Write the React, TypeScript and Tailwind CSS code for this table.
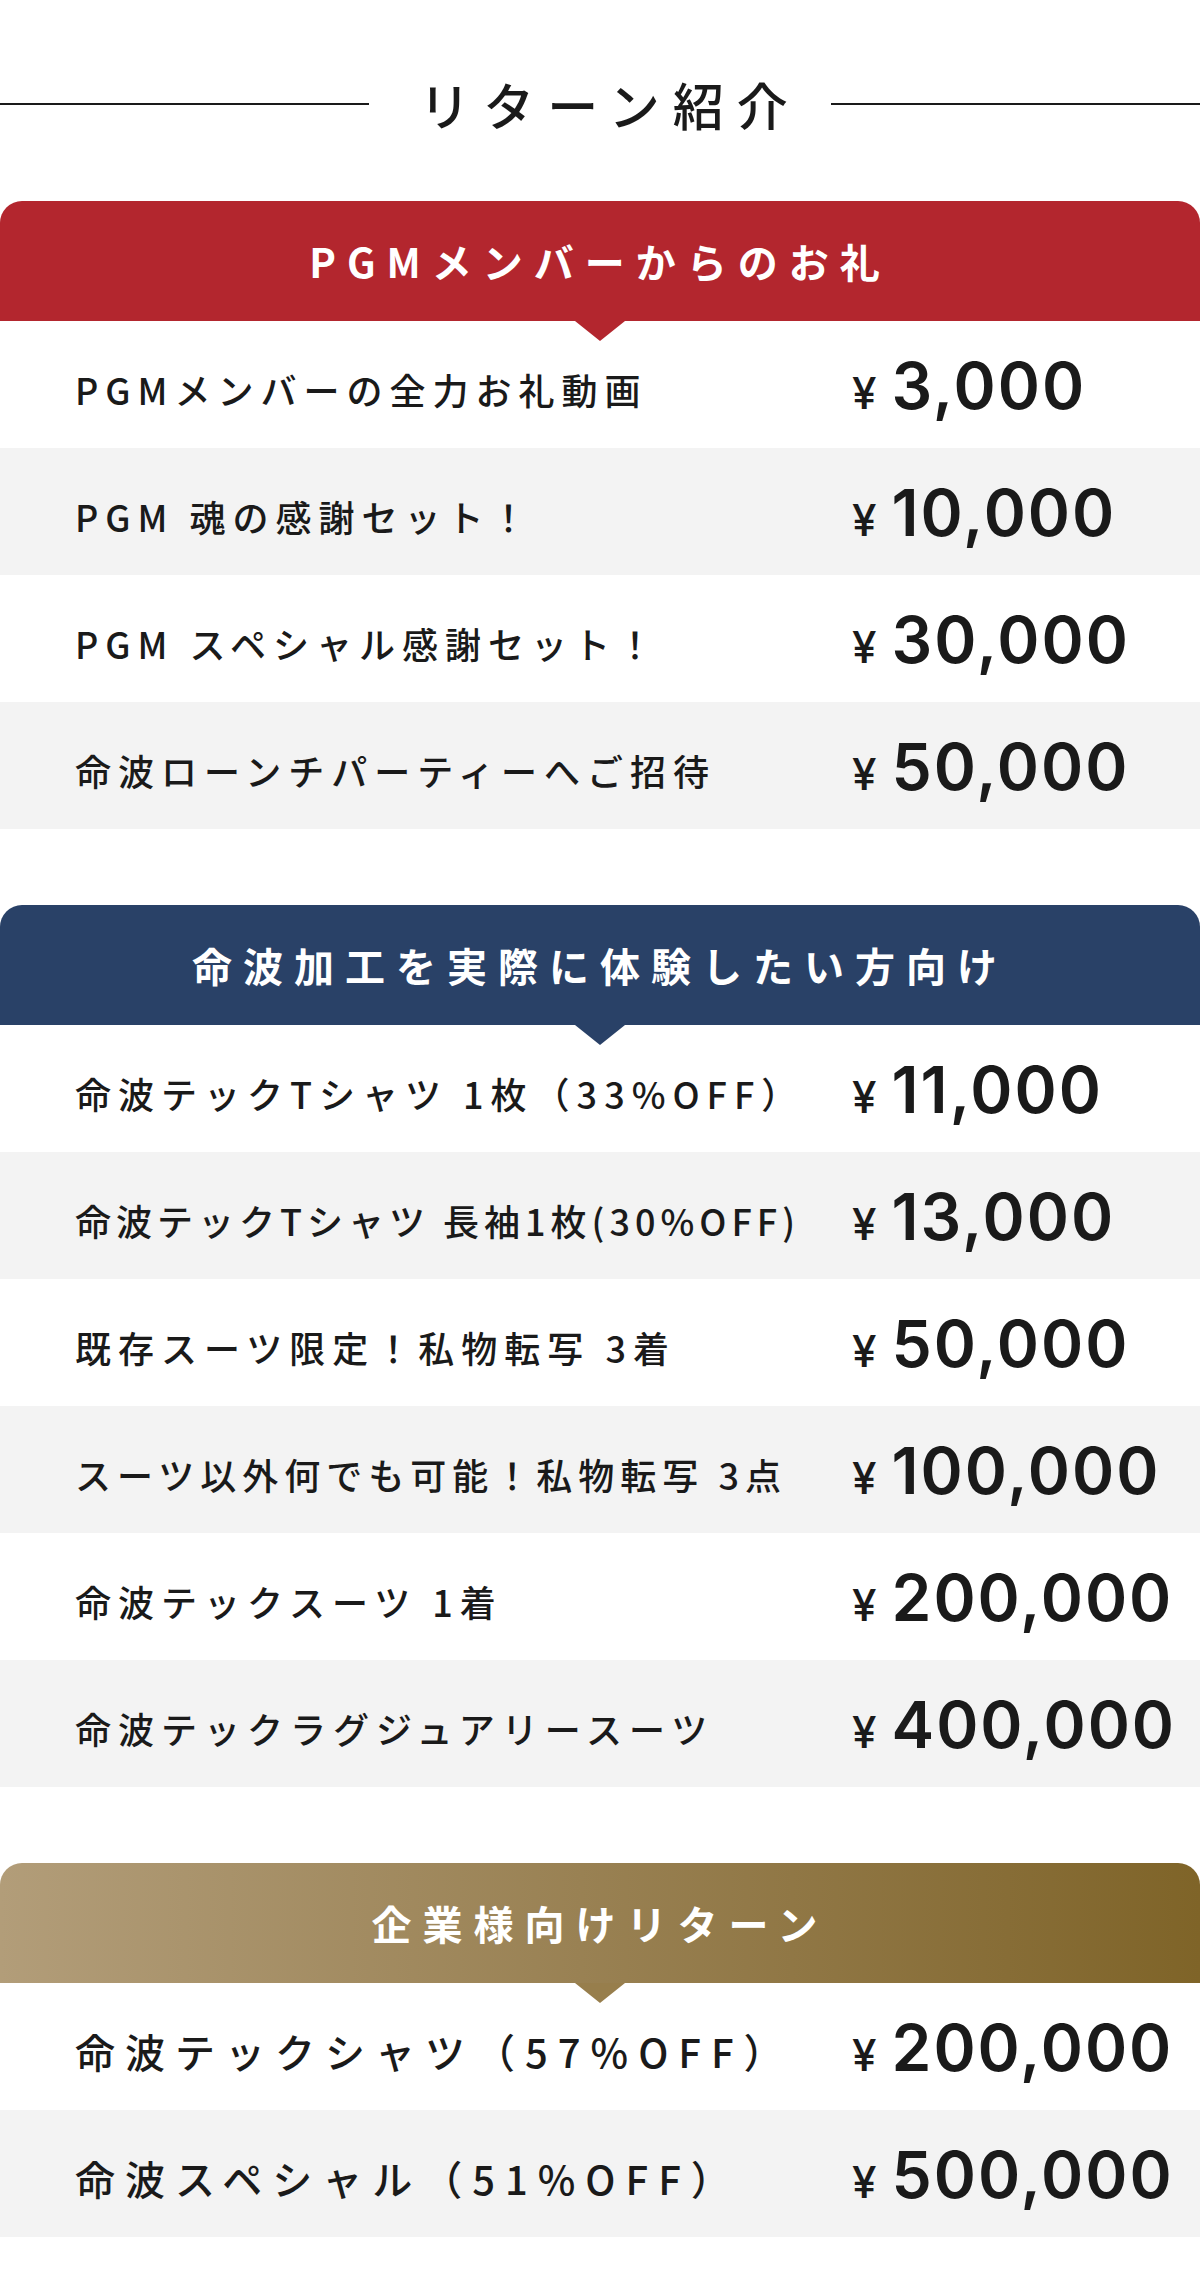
const jp = "font-['Noto_Sans_CJK_JP','Noto_Sans',sans-serif]"

type Item = { label: string; price: string; track?: string }

type Section = {
  title: string
  header: string
  tri: string
  big?: boolean
  items: Item[]
}

const sections: Section[] = [
  {
    title: 'PGMメンバーからのお礼',
    header: 'bg-[#b3262e]',
    tri: 'bg-[#b3262e]',
    items: [
      { label: 'PGMメンバーの全力お礼動画', price: '3,000' },
      { label: 'PGM 魂の感謝セット！', price: '10,000' },
      { label: 'PGM スペシャル感謝セット！', price: '30,000' },
      { label: '命波ローンチパーティーへご招待', price: '50,000' },
    ],
  },
  {
    title: '命波加工を実際に体験したい方向け',
    header: 'bg-[#294167]',
    tri: 'bg-[#294167]',
    items: [
      { label: '命波テックTシャツ 1枚（33%OFF）', price: '11,000' },
      { label: '命波テックTシャツ 長袖1枚(30%OFF)', price: '13,000', track: 'tracking-[5px]' },
      { label: '既存スーツ限定！私物転写 3着', price: '50,000' },
      { label: 'スーツ以外何でも可能！私物転写 3点', price: '100,000', track: 'tracking-[6px]' },
      { label: '命波テックスーツ 1着', price: '200,000' },
      { label: '命波テックラグジュアリースーツ', price: '400,000' },
    ],
  },
  {
    title: '企業様向けリターン',
    header: 'bg-gradient-to-r from-[#b29d79] to-[#7f6428]',
    tri: 'bg-[#977e4c]',
    big: true,
    items: [
      { label: '命波テックシャツ（57%OFF）', price: '200,000' },
      { label: '命波スペシャル（51%OFF）', price: '500,000' },
    ],
  },
]

function Row({ item, gray, big }: { item: Item; gray: boolean; big?: boolean }) {
  const size = big ? 'text-[40px] tracking-[10px]' : `text-[36px] ${item.track ?? 'tracking-[7px]'}`

  return (
    <div className={`h-[127px] flex items-center pl-[75px] ${gray ? 'bg-[#f3f3f3]' : 'bg-white'}`}>
      <p className={`flex-1 whitespace-nowrap font-medium text-[#1a1a1a] leading-none pt-[8px] ${jp} ${size}`}>
        {item.label}
      </p>
      <div className="w-[348px] shrink-0 flex items-baseline pt-[10px] text-[#1a1a1a] font-['Inter',sans-serif]">
        <span className="text-[44px] font-medium mr-[15px]">¥</span>
        <span className="text-[64px] font-semibold tracking-[2px] leading-none">{item.price}</span>
      </div>
    </div>
  )
}

export default function App() {
  return (
    <div className="w-[1200px] bg-white pt-[74px] pb-[39px]">
      {/* 見出し */}
      <div className="flex items-center h-[60px]">
        <div className="flex-1 h-[2px] bg-[#1a1a1a]" />
        <h1 className={`ml-[50px] mr-[30px] text-[51px] leading-none font-medium tracking-[13px] text-[#1a1a1a] ${jp}`}>
          リターン紹介
        </h1>
        <div className="flex-1 h-[2px] bg-[#1a1a1a]" />
      </div>

      <div className="mt-[67px] flex flex-col gap-[76px]">
        {sections.map((s) => (
          <section key={s.title}>
            <div className={`relative h-[120px] rounded-t-[22px] flex items-center justify-center ${s.header}`}>
              <h2 className={`text-white text-[40px] font-bold tracking-[11px] leading-none ${jp}`}>{s.title}</h2>
              <div
                className={`absolute left-1/2 -translate-x-1/2 top-full w-[50px] h-[20px] z-10 [clip-path:polygon(0_0,100%_0,50%_100%)] ${s.tri}`}
              />
            </div>
            {s.items.map((item, i) => (
              <Row key={item.label} item={item} gray={i % 2 === 1} big={s.big} />
            ))}
          </section>
        ))}
      </div>
    </div>
  )
}
